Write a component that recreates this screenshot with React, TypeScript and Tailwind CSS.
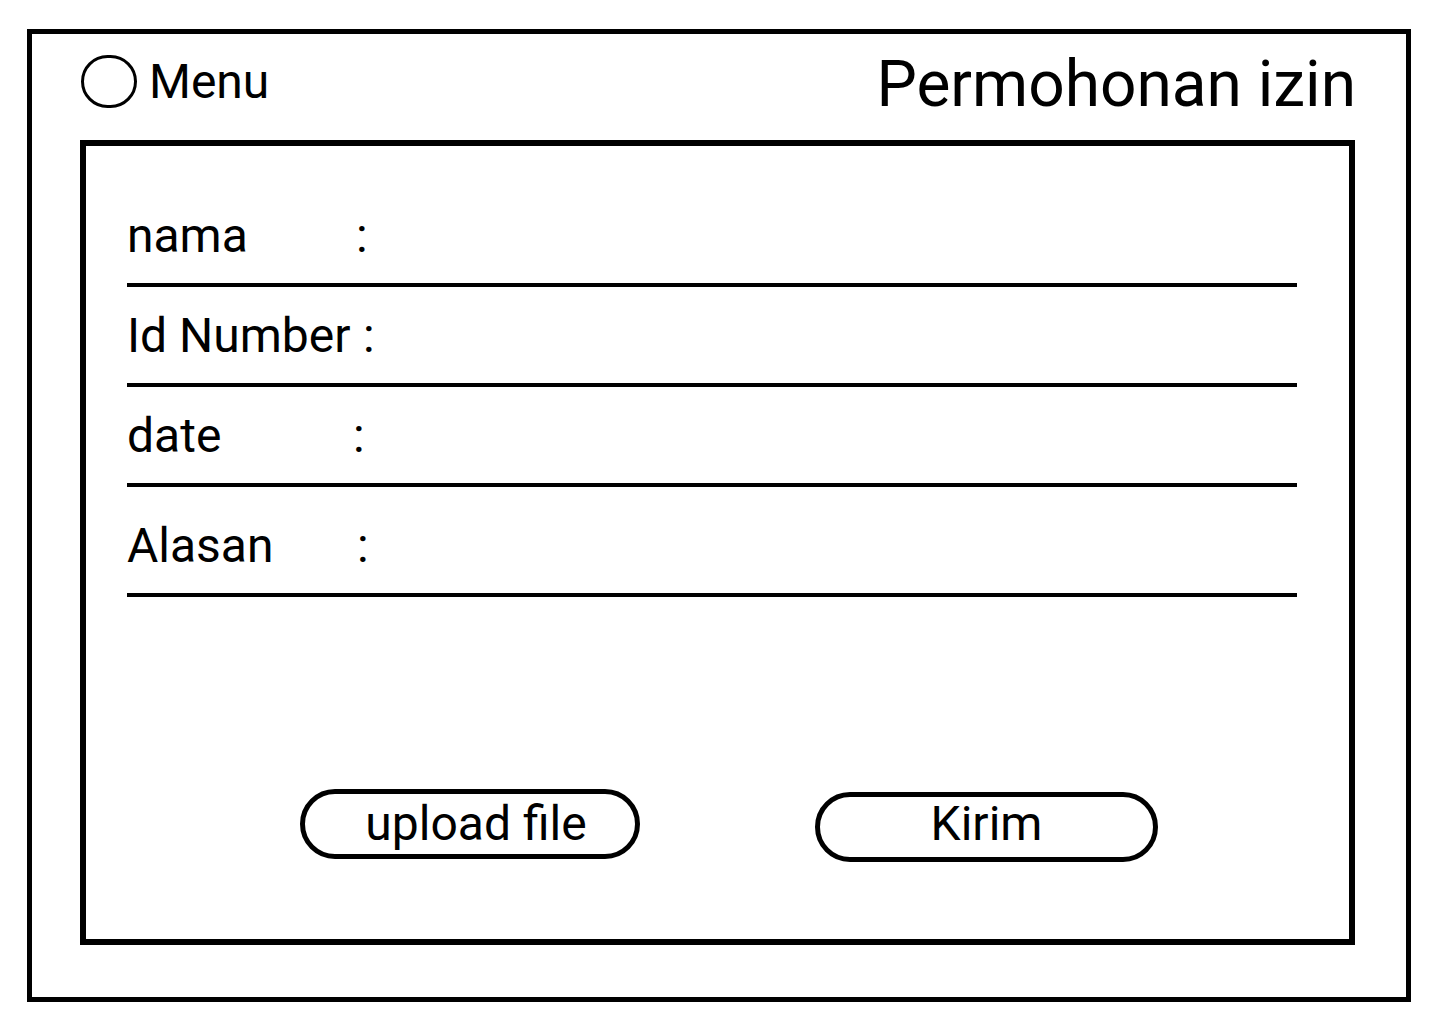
/**
 * Permohonan Izin
 * ===============
 * Wireframe form: leave request with name, id, date and reason.
 */

const fields = [
  { label: 'nama', labelW: 'w-[229px]', top: 'mt-0' },
  { label: 'Id Number', labelW: 'w-[236px]', top: 'mt-[25px]' },
  { label: 'date', labelW: 'w-[226px]', top: 'mt-[25px]' },
  { label: 'Alasan', labelW: 'w-[230px]', top: 'mt-[35px]' },
]

export default function App() {
  return (
    <div className="min-h-screen bg-white text-black font-['Roboto','Liberation_Sans',sans-serif]">
      <div className="ml-[27px] pt-[29px]">
        <div className="w-[1384px] h-[973px] border-[5px] border-black flex flex-col pl-[48px] pr-[51px] pb-[52px]">
          {/* Header */}
          <div className="h-[106px] flex items-start justify-between pt-[21px]">
            <div className="flex items-start">
              <div className="ml-[1px] w-[56px] h-[53px] rounded-full border-[3px] border-black" />
              <span className="ml-[12px] mt-[3px] text-[48px] leading-none">Menu</span>
            </div>
            <h1 className="-mt-[2px] text-[64px] leading-none font-normal -mr-[1px]">Permohonan izin</h1>
          </div>

          {/* Form card */}
          <div className="flex-1 border-[6px] border-black flex flex-col">
            <div className="pt-[66px] pl-[41px] pr-[52px]">
              {fields.map(f => (
                <div key={f.label} className={f.top}>
                  <div className="flex text-[48px] leading-none">
                    <span className={f.labelW}>{f.label}</span>
                    <span>:</span>
                  </div>
                  <div className="mt-[23px] h-[4px] bg-black" />
                </div>
              ))}
            </div>

            {/* Actions */}
            <div className="mt-[192px] pl-[214px] flex items-start gap-[175px]">
              <button className="w-[340px] h-[70px] rounded-full border-[5px] border-black flex items-center justify-center pl-[12px] text-[48px] leading-none">
                upload file
              </button>
              <button className="mt-[3px] w-[343px] h-[70px] rounded-full border-[5px] border-black flex items-center justify-center pb-[6px] text-[48px] leading-none">
                Kirim
              </button>
            </div>
          </div>
        </div>
      </div>
    </div>
  )
}
